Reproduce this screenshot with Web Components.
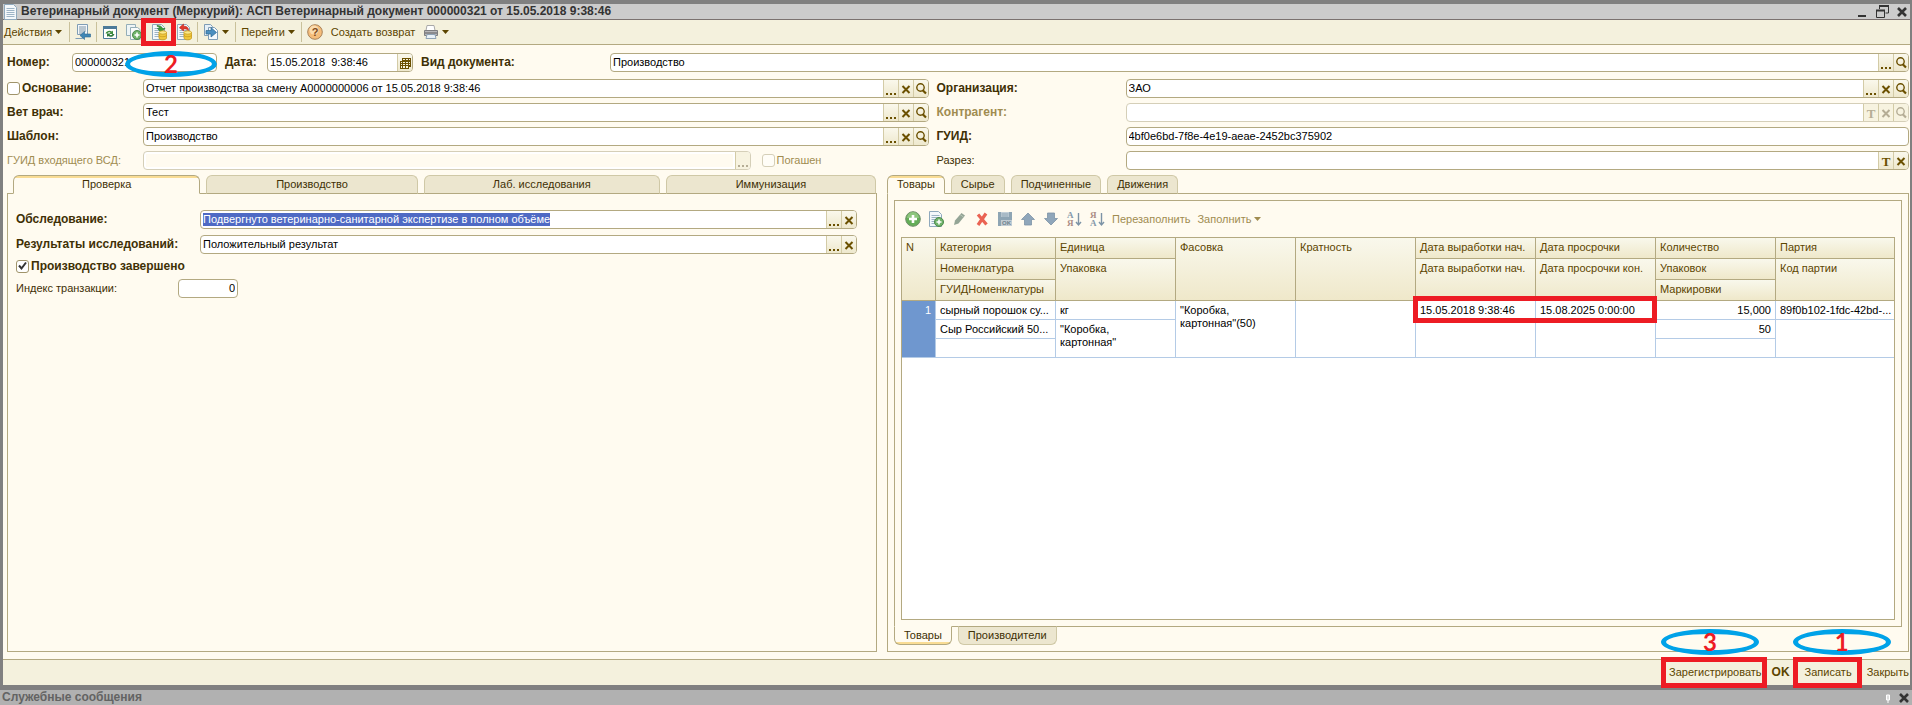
<!DOCTYPE html>
<html lang="ru">
<head>
<meta charset="utf-8">
<title>Ветеринарный документ</title>
<style>
  html, body {
    height: 100%;
    margin: 0;
  }
  body {
    background: #808080;
    font: 11px/13px "Liberation Sans", Arial, sans-serif;
    color: #403005;
  }
</style>
</head>
<body>
<vet-document></vet-document>

<script>
const doc = '<path d="M1.500 .5h9l3 3v12h-12z" fill="#f4f8fb" stroke="#8fa9bd"/><path d="M3.500 4.500h8M3.500 6.500h8M3.500 8.500h8M3.500 10.500h8M3.500 12.500h8" stroke="#9db4c6"/>';
const plus = '<circle cx="11" cy="11" r="4.500" fill="#6fb36a" stroke="#4c8a4c"/><path d="M11 8.500v5M8.500 11h5" stroke="#fff" stroke-width="1.600"/>';
const coins = '<path d="M8 8.500v5.500c0 2.400 7.500 2.400 7.500 0v-5.500z" fill="#f0c93c" stroke="#c99a1c" stroke-width=".8"/><ellipse cx="11.750" cy="8.500" rx="3.750" ry="1.700" fill="#fbe98a" stroke="#c99a1c" stroke-width=".8"/><path d="M8 11.200c0 2 7.500 2 7.500 0" fill="none" stroke="#c99a1c" stroke-width=".8"/>';

const ICONS = {
  page: doc,
  back: '<path d="M2.500 .5h10v10h-10z" fill="#f4f8fb" stroke="#7f9db5"/><path d="M.500 14.500h7v-4" fill="none" stroke="#7f9db5"/><path d="M4 3h7M4 5h7M4 7h7M4 9h4" stroke="#7f95a5"/><path d="M5 11.500l4.500-4v2.500h6v3h-6v2.500z" fill="#3f86b5" stroke="#2c6892" stroke-width=".6"/>',
  refresh: '<path d="M1.500 2.500h13v12h-13z" fill="#fff" stroke="#4c7a98"/><path d="M1 2h14v3h-14z" fill="#4c7a98"/><path d="M3.500 9.500c1-3 4.500-3.500 6.500-2l1-1v3.500h-3.500l1-1.200c-1.200-.8-2.500-.5-3 .7z" fill="#3f8f3f"/><path d="M12.500 10c-1 3-4.500 3.500-6.500 2l-1 1v-3.500h3.500l-1 1.200c1.200.8 2.500.5 3-.7z" fill="#2f7a3a"/>',
  copyadd: '<path d="M.500 .5h9v11h-9z" fill="#eef5f6" stroke="#94aeb8"/><path d="M4.500 3.500h7l2.500 2v10h-9.500z" fill="#f8fbfb" stroke="#94aeb8"/>' + plus,
  addcopy: doc + plus,
  post: doc + '<path d="M6 1.500c3 0 5 1 5.500 3h2.500l-4 4-3.500-4h2.200c-.4-1.200-1.300-2-2.700-2.300z" fill="#3c9c3c" stroke="#237023" stroke-width=".6"/>' + coins,
  unpost: doc + '<path d="M3.500 3.500l4-3.500v2.200c4 0 5.500 2 5 5.300-.8-2-2-2.700-5-2.700v2.200z" fill="#e2382b" stroke="#b3261c" stroke-width=".6"/>' + coins,
  based: '<path d="M1.500 .5h6l2 2v9h-8z" fill="#e6f0f7" stroke="#7f9db5"/><path d="M5.500 3.500h6l3 3v9h-9z" fill="#f5f9fc" stroke="#7f9db5"/><path d="M3 6.500h5v-3l5.500 5-5.500 4.500v-3h-5z" fill="#4b8fc0" stroke="#2c6892" stroke-width=".7"/>',
  help: '<circle cx="8" cy="8" r="7.300" fill="#f5bd7a" stroke="#a98258"/><circle cx="7" cy="6" r="4.500" fill="#fbdcae"/><text x="8" y="12" text-anchor="middle" font-size="11" font-weight="bold" fill="#7d4a1a">?</text>',
  printer: '<path d="M4 1.500h7l1 5h-9z" fill="#fff" stroke="#a9a9a9"/><path d="M1.500 6.500h13v5h-13z" fill="#b8b8ba" stroke="#7e7e80"/><path d="M2 9h12" stroke="#5f5f62"/><path d="M4 10.500h8l1 4h-10z" fill="#e9f1f7" stroke="#8fa3b5"/>',
  add: '<circle cx="8" cy="8" r="7.300" fill="#63ad57" stroke="#6f8e6a"/><path d="M2 7a6 6 0 0 1 12 0z" fill="#9fd08f" opacity=".7"/><path d="M8 4v8M4 8h8" stroke="#fff" stroke-width="2.600"/>',
  pencil: '<path d="M3 14l1-4.500 6.500-7.500 3.500 2.500-6.500 8z" fill="#94a596"/><path d="M9 3.500l3.500 2.500" stroke="#b9c6b8"/>',
  cross: '<path d="M4 3.500l8.500 10M12 2.500l-8 11.500" stroke="#ea6353" stroke-width="3.200"/>',
  save: '<path d="M1 1h14v14h-14z" fill="#8ea5b4"/><path d="M4 1h8v5h-8z" fill="#c3d0d8"/><path d="M4.500 3h7M4.500 5h7" stroke="#8ea5b4"/><path d="M4 9h11v6h-11z" fill="#c3cdd4"/><text x="9.500" y="14" text-anchor="middle" font-size="6" font-weight="bold" fill="#70838f">OK</text>',
  up: '<path d="M8 2l6.500 6.500h-3v5.500h-7v-5.500h-3z" fill="#8fa6ba" stroke="#7c93a6" stroke-width=".8"/>',
  down: '<path d="M8 14l6.500-6.500h-3v-5.500h-7v5.500h-3z" fill="#8fa6ba" stroke="#7c93a6" stroke-width=".8"/>',
  asc: '<g font-family="Liberation Serif" font-weight="bold" font-size="9"><text x="1" y="7" fill="#8599aa">А</text><text x="1" y="15" fill="#ab8b85">Я</text></g><path d="M12.500 2v12M10 11l2.500 3 2.500-3" fill="none" stroke="#7c93a6" stroke-width="1.400"/>',
  desc: '<g font-family="Liberation Serif" font-weight="bold" font-size="9"><text x="1" y="7" fill="#ab8b85">Я</text><text x="1" y="15" fill="#8599aa">А</text></g><path d="M12.500 2v12M10 11l2.500 3 2.500-3" fill="none" stroke="#7c93a6" stroke-width="1.400"/>',
  dots: '<path d="M3 12h2v2h-2zM7 12h2v2h-2zM11 12h2v2h-2z" fill="currentColor"/>',
  x: '<path d="M4.500 5l7 7M11.500 5l-7 7" stroke="currentColor" stroke-width="2"/>',
  lens: '<circle cx="7.500" cy="6.500" r="3.700" fill="none" stroke="currentColor" stroke-width="1.400"/><path d="M9.500 9l3.500 3.500" stroke="currentColor" stroke-width="2.200"/>',
  t: '<text x="8" y="13" text-anchor="middle" font-family="Liberation Serif" font-weight="bold" font-size="13" fill="currentColor">T</text>',
  calendar: '<path d="M5 3h9v9h-2v2h-9v-8h2z" fill="currentColor"/><path d="M6 4h2v1h-2zM9 4h2v1h-2zM12 4h1v1h-1zM4 7h1v1h-1zM6 7h2v1h-2zM9 7h2v1h-2zM12 7h1v1h-1zM4 9h1v1h-1zM6 9h2v1h-2zM9 9h2v1h-2zM12 9h1v1h-1zM4 11h1v2h-1zM6 11h2v2h-2zM9 11h2v2h-2z" fill="#f6f2dd"/>',
  caret: '<path d="M1 6h7l-3.500 4z" fill="currentColor"/>',
  min: '<path d="M4 11h8v2h-8z" fill="#333"/>',
  restore: '<path d="M5.500 5v-3h9v7h-3" fill="none" stroke="#333"/><path d="M5 2h10" stroke="#333" stroke-width="2"/><path d="M2.500 6.500h8v7h-8z" fill="none" stroke="#333"/><path d="M2 6.500h9" stroke="#333" stroke-width="2"/>',
  close: '<path d="M4 4l8 8M12 4l-8 8" stroke="#333" stroke-width="2.600"/>',
  pin: '<path d="M6.500 5h3v5h-3z" fill="#ddd" stroke="#fff"/><path d="M8 10v3" stroke="#fff"/>'
};

class VetIcon extends HTMLElement {
  connectedCallback() {
    const name = this.getAttribute('name');
    const w = name == 'caret' ? 9 : 16;
    this.attachShadow({mode: 'open'}).innerHTML = `
      <style>
        :host { display: block; flex: none; }
        svg { display: block; overflow: visible; font-family: "Liberation Sans", sans-serif; line-height: 1; }
      </style>
      <svg width="${w}" height="16" viewBox="0 0 ${w} 16" aria-hidden="true">${ICONS[name]}</svg>
    `;
  }
}
customElements.define('vet-icon', VetIcon);

/* one toolbar command: optional icon, text in the slot, optional drop-down arrow */
class ToolButton extends HTMLElement {
  connectedCallback() {
    const icon = this.getAttribute('icon');
    const title = this.getAttribute('title');
    this.attachShadow({mode: 'open'}).innerHTML = `
      <style>
        :host { display: block; position: relative; flex: none; }
        button {
          display: flex;
          align-items: center;
          gap: 2px;
          height: 24px;
          padding: 0 var(--pad, 4px) 0 4px;
          border: 0;
          background: none;
          font: inherit;
          color: inherit;
          white-space: nowrap;
        }
        :host([flush]) button { padding: 0 1px; }
      </style>
      <button type="button" ${title ? `aria-label="${title}"` : ''}>
        ${icon ? `<vet-icon name="${icon}"></vet-icon>` : ''}
        <slot></slot>
        ${this.hasAttribute('menu') ? '<vet-icon name="caret"></vet-icon>' : ''}
      </button>
      <slot name="mark"></slot>
    `;
  }
}
customElements.define('tool-button', ToolButton);

class ToolSep extends HTMLElement {
  connectedCallback() {
    this.attachShadow({mode: 'open'}).innerHTML = `
      <style>
        :host { display: block; width: 1px; height: 20px; margin: 0 1px; background: #c9c19b; flex: none; }
      </style>
    `;
  }
}
customElements.define('tool-sep', ToolSep);

/* red frame that lies over the element around it, grown by --out */
class MarkFrame extends HTMLElement {
  connectedCallback() {
    this.attachShadow({mode: 'open'}).innerHTML = `
      <style>
        :host {
          position: absolute;
          inset: var(--out, 0);
          border: 5px solid #ed1c24;
          pointer-events: none;
          z-index: 2;
        }
      </style>
    `;
  }
}
customElements.define('mark-frame', MarkFrame);

/* blue oval with the number of the step */
class MarkStep extends HTMLElement {
  connectedCallback() {
    this.attachShadow({mode: 'open'}).innerHTML = `
      <style>
        :host {
          position: absolute;
          display: flex;
          align-items: center;
          justify-content: center;
          box-sizing: border-box;
          width: 98px;
          height: 26px;
          border: 5px solid #00a2e8;
          border-radius: 50%;
          font: bold 24px/24px Lato, sans-serif;
          color: #ed1c24;
          pointer-events: none;
          z-index: 2;
        }
      </style>
      <slot></slot>
    `;
  }
}
customElements.define('mark-step', MarkStep);

class FormField extends HTMLElement {
  connectedCallback() {
    const names = {dots: 'Выбрать', x: 'Очистить', lens: 'Открыть', t: 'Тип', calendar: 'Календарь'};
    const buttons = (this.getAttribute('buttons') || '').split(' ').filter(Boolean);
    const off = this.hasAttribute('disabled') ? 'disabled' : '';
    this.attachShadow({mode: 'open'}).innerHTML = `
      <style>
        :host { display: flex; align-items: center; position: relative; min-width: 0; }
        label { flex: none; width: var(--label, auto); white-space: nowrap; }
        :host([bold]) label { font-weight: bold; font-size: 12px; }
        :host([disabled]) label { color: #a08c50; }
        .box {
          display: flex;
          flex: 1;
          min-width: 0;
          height: 17px;
          border: 1px solid #b3a981;
          border-radius: 4px;
          background: #fff;
          overflow: hidden;
        }
        :host([disabled]) .box { border-color: #d5cfb8; }
        input {
          flex: 1;
          min-width: 0;
          margin: 0;
          padding: 0 2px;
          border: 0;
          outline: 0;
          background: none;
          font: inherit;
          color: #000;
        }
        :host([plain]) input { background: #fffbf0; margin: 2px; }
        :host([number]) input { text-align: right; }
        input::selection { background: #4f6ac4; color: #fff; }
        button {
          display: flex;
          align-items: center;
          justify-content: center;
          width: 15px;
          padding: 0;
          border: 0;
          border-left: 1px solid #d3cba6;
          background: linear-gradient(#faf8ec, #eee8cd);
          color: #6b5000;
        }
        button:disabled { color: #b5ad95; background: #f7f3e0; }
      </style>
      <label for="f">${this.getAttribute('label')}</label>
      <div class="box">
        <input id="f" type="text" value="${this.getAttribute('value') || ''}" ${off}>
        ${buttons.map(b => `<button type="button" aria-label="${names[b]}" ${off}><vet-icon name="${b}"></vet-icon></button>`).join('')}
      </div>
      <slot></slot>
    `;
    if (this.hasAttribute('selected')) {
      const input = this.shadowRoot.querySelector('input');
      input.focus();
      input.select();
    }
  }
}
customElements.define('form-field', FormField);

class CheckField extends HTMLElement {
  connectedCallback() {
    this.attachShadow({mode: 'open'}).innerHTML = `
      <style>
        :host { display: flex; align-items: center; gap: 2px; flex: none; }
        :host([bold]) { font-weight: bold; font-size: 12px; }
        :host([disabled]) { color: #a08c50; }
        input {
          appearance: none;
          width: 13px;
          height: 13px;
          margin: 0;
          border: 1px solid #a0946a;
          border-radius: 3px;
          background: #fff;
        }
        input:checked {
          background: #fff url('data:image/svg+xml,<svg xmlns="http://www.w3.org/2000/svg" viewBox="0 0 11 11"><path d="M2 4.500l2.500 3 4.500-6" fill="none" stroke="%23333" stroke-width="2"/></svg>');
        }
        input:disabled { border-color: #d5cfb8; background: #fffdf7; }
      </style>
      <input id="c" type="checkbox" ${this.hasAttribute('checked') ? 'checked' : ''} ${this.hasAttribute('disabled') ? 'disabled' : ''}>
      <label for="c"><slot></slot></label>
    `;
  }
}
customElements.define('check-field', CheckField);

/* tabs: "Name" or "Name:weight"; weighted tabs share the whole width */
class TabPane extends HTMLElement {
  connectedCallback() {
    const bottom = this.hasAttribute('bottom');
    const tabs = this.getAttribute('tabs').split('|').map((t, i) => {
      const [name, weight] = t.split(':');
      const grow = weight ? `style="flex: ${weight} 1 0; padding: 0"` : '';
      return `<button type="button" role="tab" aria-selected="${i == 0}" ${grow}>${name}</button>`;
    }).join('');
    this.attachShadow({mode: 'open'}).innerHTML = `
      <style>
        :host { display: flex; flex-direction: ${bottom ? 'column-reverse' : 'column'}; min-width: 0; min-height: 0; }
        .tabs {
          display: flex;
          gap: 6px;
          padding: 0 1px 0 var(--inset, 0);
          position: relative;
          z-index: 1;
          margin-bottom: -1px;
        }
        button {
          height: 19px;
          padding: 0 9px;
          border: 1px solid #cfc8a6;
          border-bottom-color: #b3a981;
          border-radius: 6px 6px 0 0;
          background: #ece6cf;
          font: inherit;
          color: inherit;
          white-space: nowrap;
        }
        button[aria-selected=true] {
          border-color: #b3a981;
          border-bottom-color: #fffbf0;
          background: linear-gradient(#f9dc94 2px, #fffbf0 2px);
        }
        .pane {
          flex: 1;
          display: flex;
          flex-direction: column;
          min-height: 0;
          border: 1px solid #b3a981;
        }
        :host([bottom]) .tabs { margin: -1px 0 0; }
        :host([bottom]) button { border-color: #cfc8a6; border-top-color: #b3a981; border-radius: 0 0 6px 6px; }
        :host([bottom]) button[aria-selected=true] {
          border-color: #b3a981;
          border-top-color: #fffbf0;
          background: linear-gradient(#fffbf0 15px, #f9dc94 15px);
        }
      </style>
      <div class="tabs" role="tablist">${tabs}</div>
      <div class="pane"><slot></slot></div>
    `;
  }
}
customElements.define('tab-pane', TabPane);

class GoodsTable extends HTMLElement {
  connectedCallback() {
    this.attachShadow({mode: 'open'}).innerHTML = `
      <style>
        :host { display: block; flex: 1; border: 1px solid #b3a981; background: #fff; min-height: 0; }
        table { width: 100%; table-layout: fixed; border-spacing: 0; }
        .n { width: 34px; }
        .c { width: 120px; }
        th, td {
          box-sizing: border-box;
          padding: 3px 4px 0;
          border: 0 solid #b3a981;
          border-width: 0 1px 1px 0;
          font-weight: normal;
          text-align: left;
          vertical-align: top;
          line-height: 13px;
          white-space: nowrap;
        }
        tr > :last-child.e { border-right: 0; }
        th { height: 21px; background: linear-gradient(#f9f8ec, #efe8ca); color: #5c4500; }
        td { height: 19px; border-color: #b4cbe6; color: #000; }
        td.wrap { white-space: normal; padding-right: 14px; }
        td.num { text-align: right; }
        td.no { background: #6f97cf; color: #fff; text-align: right; }
        .from { position: relative; }
        mark-frame { inset: -5px calc(-100% - 3px) -4px -3px; }
      </style>
      <table>
        <colgroup><col class="n"><col span="7" class="c"><col></colgroup>
        <thead>
          <tr>
            <th rowspan="3">N</th><th>Категория</th><th>Единица</th><th rowspan="3">Фасовка</th><th rowspan="3">Кратность</th>
            <th>Дата выработки нач.</th><th>Дата просрочки</th><th>Количество</th><th class="e">Партия</th>
          </tr>
          <tr>
            <th>Номенклатура</th><th rowspan="2">Упаковка</th><th rowspan="2">Дата выработки нач.</th>
            <th rowspan="2">Дата просрочки кон.</th><th>Упаковок</th><th rowspan="2" class="e">Код партии</th>
          </tr>
          <tr><th>ГУИДНоменклатуры</th><th>Маркировки</th></tr>
        </thead>
        <tbody>
          <tr>
            <td rowspan="3" class="no">1</td><td>сырный порошок су...</td><td>кг</td>
            <td rowspan="3" class="wrap">"Коробка, картонная"(50)</td><td rowspan="3"></td>
            <td class="from">15.05.2018 9:38:46<mark-frame></mark-frame></td><td>15.08.2025 0:00:00</td>
            <td class="num">15,000</td><td class="e">89f0b102-1fdc-42bd-...</td>
          </tr>
          <tr>
            <td>Сыр Российский 50...</td><td rowspan="2" class="wrap">"Коробка, картонная"</td>
            <td rowspan="2"></td><td rowspan="2"></td><td class="num">50</td><td rowspan="2" class="e"></td>
          </tr>
          <tr><td></td><td></td></tr>
        </tbody>
      </table>
    `;
  }
}
customElements.define('goods-table', GoodsTable);

class VetDocument extends HTMLElement {
  connectedCallback() {
    this.attachShadow({mode: 'open'}).innerHTML = `
      <style>
        :host { display: flex; flex-direction: column; height: 100%; overflow: hidden; }
        .window {
          flex: 1;
          display: flex;
          flex-direction: column;
          min-height: 0;
          margin: 4px 2px 5px 3px;
          background: #fffbf0;
        }
        header {
          display: flex;
          align-items: center;
          gap: 2px;
          height: 15px;
          border-bottom: 1px solid #7b7270;
          background: #ccc;
          color: #333;
        }
        h1 { flex: 1; margin: 0; font-size: 12px; line-height: 15px; white-space: nowrap; }
        header div { display: flex; gap: 4px; }
        header button, .status button { padding: 0; border: 0; background: none; }
        nav {
          display: flex;
          align-items: center;
          height: 24px;
          border-bottom: 1px solid #b3a981;
          background: #f4f1dd;
          color: #5c4500;
        }
        nav [flush] { margin-right: 4px; }
        nav [icon=post] { margin: 0 1px; }
        main { flex: 1; display: flex; flex-direction: column; min-height: 0; padding: 8px 1px 7px 4px; }
        .row { display: flex; gap: 8px; margin-bottom: 7px; }
        .cols { display: grid; grid-template-columns: 922fr 973fr; gap: 5px 8px; margin-bottom: 5px; }
        .kind { flex: 1; --label: 189px; }
        .left { --label: 136px; }
        .right { --label: 189px; }
        .base { display: flex; gap: 2px; }
        .base form-field { flex: 1; --label: 121px; }
        .base check-field { gap: 0; }
        .wax { display: flex; gap: 11px; }
        .wax form-field { flex: 1; }
        .wax check-field { width: 167px; }
        .panes { flex: 1; display: grid; grid-template-columns: 870fr 1022fr; gap: 10px; min-height: 0; }
        .check { display: flex; flex-direction: column; gap: 6px; padding: 16px 19px 0 8px; --label: 184px; }
        .check .index { --label: 162px; width: 222px; }
        .goods { padding: 6px; flex: 1; display: flex; }
        .goods tab-pane { flex: 1; }
        .list { flex: 1; display: flex; flex-direction: column; padding: 0 6px 6px; min-height: 0; }
        .commands { display: flex; align-items: center; height: 36px; color: #a08c50; --pad: 3px; }
        footer {
          display: flex;
          align-items: center;
          justify-content: flex-end;
          gap: 2px;
          height: 25px;
          border-top: 1px solid #b3a981;
          background: #f4f1dd;
          color: #5c4500;
        }
        footer b { font-size: 12px; }
        footer [flush] { margin-left: 8px; }
        .status {
          display: flex;
          align-items: center;
          height: 15px;
          padding: 0 0 0 2px;
          background: #b1b1b1;
          color: #636363;
        }
        .status strong { flex: 1; font-size: 12px; }
        .status div { display: flex; }
      </style>
      <div class="window">
        <header>
          <vet-icon name="page"></vet-icon>
          <h1>Ветеринарный документ (Меркурий): АСП Ветеринарный документ 000000321 от 15.05.2018 9:38:46</h1>
          <div>
            <button type="button" aria-label="Свернуть"><vet-icon name="min"></vet-icon></button>
            <button type="button" aria-label="Восстановить"><vet-icon name="restore"></vet-icon></button>
            <button type="button" aria-label="Закрыть окно"><vet-icon name="close"></vet-icon></button>
          </div>
        </header>
        <nav>
          <tool-button menu flush>Действия</tool-button>
          <tool-sep></tool-sep>
          <tool-button icon="back" title="Перейти к списку"></tool-button>
          <tool-sep></tool-sep>
          <tool-button icon="refresh" title="Обновить"></tool-button>
          <tool-button icon="copyadd" title="Скопировать"></tool-button>
          <tool-button icon="post" title="Провести"><mark-frame slot="mark" style="--out: -2px -5px -2px -6px"></mark-frame></tool-button>
          <tool-button icon="unpost" title="Отменить проведение"></tool-button>
          <tool-sep></tool-sep>
          <tool-button icon="based" title="Ввести на основании" menu></tool-button>
          <tool-sep></tool-sep>
          <tool-button menu>Перейти</tool-button>
          <tool-sep></tool-sep>
          <tool-button icon="help" title="Справка"></tool-button>
          <tool-button>Создать возврат</tool-button>
          <tool-button icon="printer" title="Печать" menu></tool-button>
        </nav>
        <main>
          <div class="row">
            <form-field bold label="Номер:" value="000000321" style="--label: 65px; width: 210px">
              <mark-step style="width: 92px; right: 0; top: -2px">2</mark-step>
            </form-field>
            <form-field bold label="Дата:" value="15.05.2018  9:38:46" buttons="calendar" style="--label: 42px; width: 188px"></form-field>
            <form-field bold class="kind" label="Вид документа:" value="Производство" buttons="dots lens"></form-field>
          </div>
          <div class="cols">
            <div class="base">
              <check-field></check-field>
              <form-field bold label="Основание:" value="Отчет производства за смену А0000000006 от 15.05.2018 9:38:46" buttons="dots x lens"></form-field>
            </div>
            <form-field bold class="right" label="Организация:" value="ЗАО" buttons="dots x lens"></form-field>
            <form-field bold class="left" label="Вет врач:" value="Тест" buttons="dots x lens"></form-field>
            <form-field bold disabled class="right" label="Контрагент:" buttons="t x lens"></form-field>
            <form-field bold class="left" label="Шаблон:" value="Производство" buttons="dots x lens"></form-field>
            <form-field bold class="right" label="ГУИД:" value="4bf0e6bd-7f8e-4e19-aeae-2452bc375902"></form-field>
            <div class="wax left">
              <form-field disabled plain label="ГУИД входящего ВСД:" buttons="dots"></form-field>
              <check-field disabled>Погашен</check-field>
            </div>
            <form-field class="right" label="Разрез:" buttons="t x"></form-field>
          </div>
          <div class="panes">
            <tab-pane tabs="Проверка:187|Производство:211|Лаб. исследования:236|Иммунизация:210" style="--inset: 6px">
              <div class="check">
                <form-field bold selected label="Обследование:" value="Подвергнуто ветеринарно-санитарной экспертизе в полном объёме" buttons="dots x"></form-field>
                <form-field bold label="Результаты исследований:" value="Положительный результат" buttons="dots x"></form-field>
                <check-field bold checked>Производство завершено</check-field>
                <form-field number class="index" label="Индекс транзакции:" value="0"></form-field>
              </div>
            </tab-pane>
            <tab-pane tabs="Товары|Сырье|Подчиненные|Движения">
              <div class="goods">
                <tab-pane bottom tabs="Товары|Производители">
                  <div class="list">
                    <div class="commands">
                      <tool-button icon="add" title="Добавить"></tool-button>
                      <tool-button icon="addcopy" title="Добавить копированием"></tool-button>
                      <tool-button icon="pencil" title="Изменить"></tool-button>
                      <tool-button icon="cross" title="Удалить"></tool-button>
                      <tool-button icon="save" title="Закончить редактирование"></tool-button>
                      <tool-button icon="up" title="Вверх"></tool-button>
                      <tool-button icon="down" title="Вниз"></tool-button>
                      <tool-button icon="asc" title="По возрастанию"></tool-button>
                      <tool-button icon="desc" title="По убыванию"></tool-button>
                      <tool-button>Перезаполнить</tool-button>
                      <tool-button menu>Заполнить</tool-button>
                    </div>
                    <goods-table></goods-table>
                  </div>
                </tab-pane>
              </div>
            </tab-pane>
          </div>
        </main>
        <footer>
          <tool-button>Зарегистрировать
            <mark-frame slot="mark" style="--out: -4px -1px -3px -4px"></mark-frame>
            <mark-step slot="mark" style="left: -4px; top: -32px">3</mark-step>
          </tool-button>
          <tool-button><b>OK</b></tool-button>
          <tool-sep></tool-sep>
          <tool-button>Записать
            <mark-frame slot="mark" style="--out: -4px -6px -3px -8px"></mark-frame>
            <mark-step slot="mark" style="left: -8px; top: -32px">1</mark-step>
          </tool-button>
          <tool-button flush>Закрыть</tool-button>
        </footer>
      </div>
      <div class="status">
        <strong>Служебные сообщения</strong>
        <div>
          <button type="button" aria-label="Закрепить"><vet-icon name="pin"></vet-icon></button>
          <button type="button" aria-label="Закрыть сообщения"><vet-icon name="close"></vet-icon></button>
        </div>
      </div>
    `;
  }
}
customElements.define('vet-document', VetDocument);
</script>
</body>
</html>
